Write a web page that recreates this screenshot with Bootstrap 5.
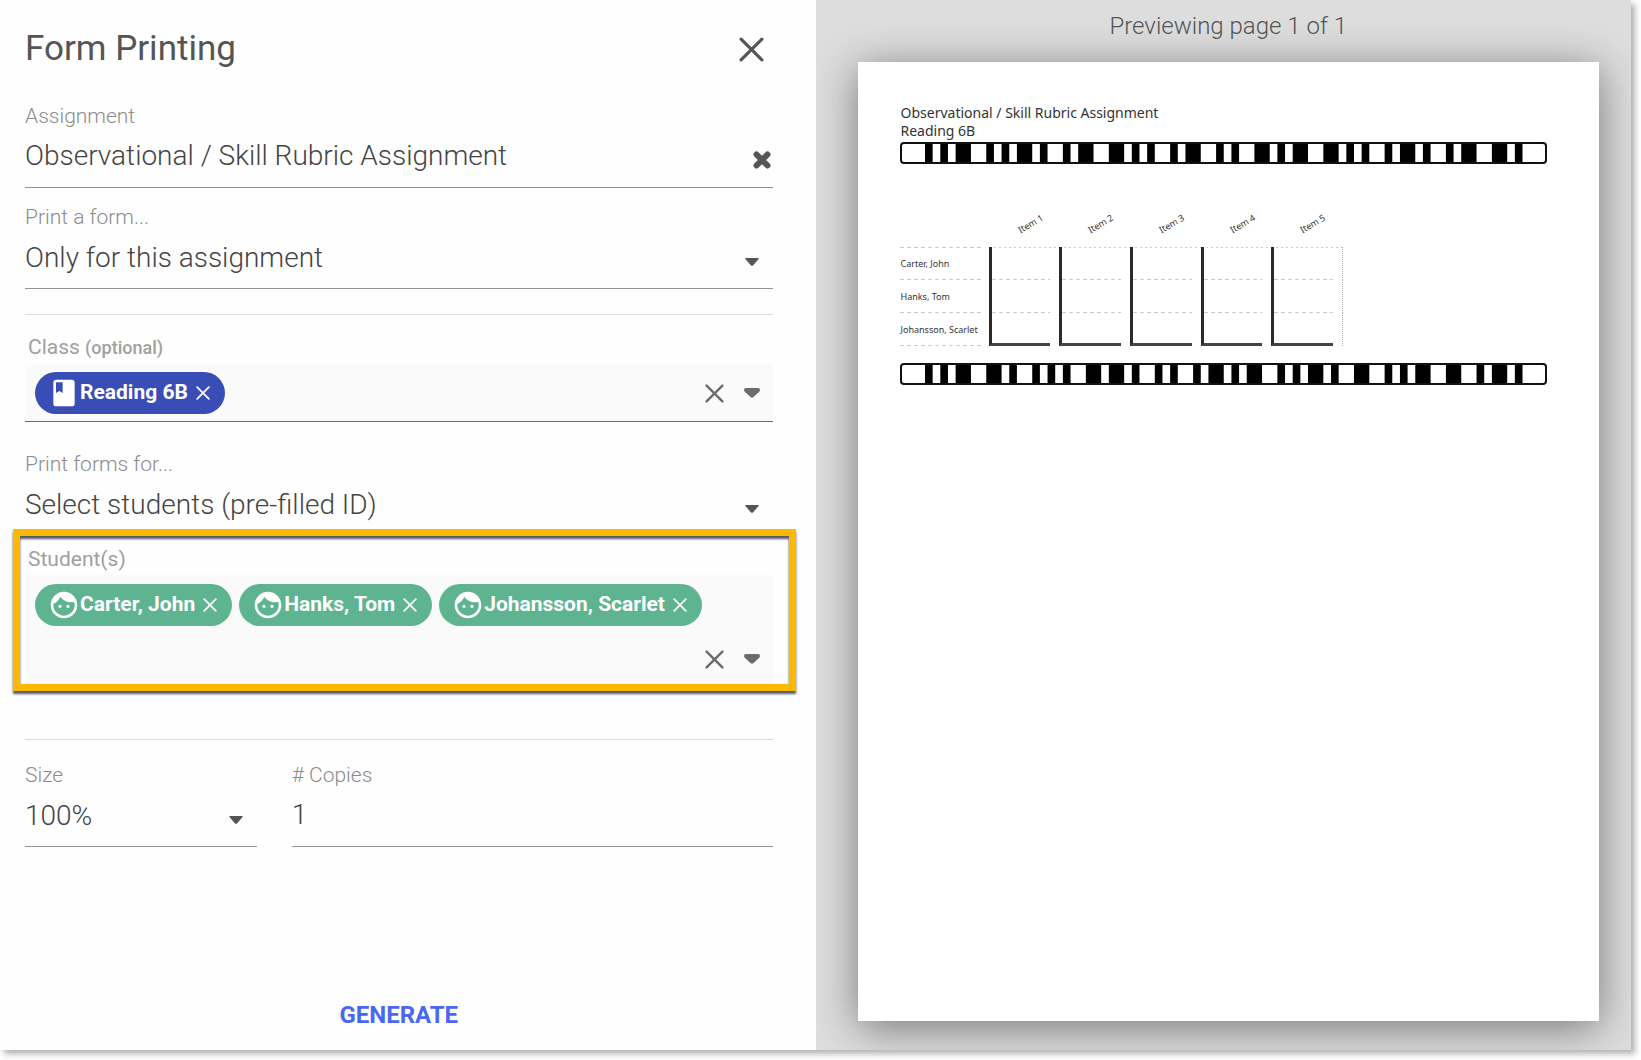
<!DOCTYPE html>
<html lang="en">
<head>
<meta charset="utf-8">
<meta name="viewport" content="width=device-width, initial-scale=1">
<title>Form Printing</title>
<link href="https://cdn.jsdelivr.net/npm/bootstrap@5.3.0/dist/css/bootstrap.min.css" rel="stylesheet">
<style>
  body { font-family: Roboto, "Liberation Sans", sans-serif; color: #555; background: #fff; padding: 0 10px 10px 0; }
  .print-dialog { box-shadow: 4px 4px 6px rgba(0,0,0,.3); }
  .form-side { background: #fefefe; padding: 25px 43px 16px 25px; }
  .dialog-title { font-size: 35px; line-height: 48px; font-weight: 400; }
  .icon-btn { border: 0; background: none; padding: 0; color: inherit; display: flex; }
  .title-close { margin-right: 9px; }
  .stroke-icon { fill: none; stroke: currentColor; stroke-linecap: round; }
  .first-field { margin-top: 31px; }
  .field-label { display: block; font-size: 21px; line-height: 24px; font-weight: 300; color: #8c8c8c; }
  .tag-label { font-weight: 400; color: #a0a0a0; padding-left: 3px; margin-bottom: 4px; }
  .tag-label span { font-size: 18px; font-weight: 500; }
  .field-value { display: block; width: 100%; height: 60px; border: 0; border-bottom: 1px solid #949494; border-radius: 0; background: none; padding: 0 40px 5px 0; font-size: 28px; font-weight: 300; color: #444; appearance: none; outline: 0; }
  select.field-value { padding-bottom: 1px; }
  .field-arrow { right: 14px; top: 53px; pointer-events: none; }
  .field-clear { right: 2px; top: 47px; }
  .field-gap { margin-top: 17px; }
  .rule { height: 1px; border: 0; background: #dcdcdc; opacity: 1; }
  .rule-upper { margin: 25px 0 0; }
  .rule-lower { margin: 54px 0 0; }
  .tag-box { background: #fafafa; padding: 8px 13px 7px 10px; gap: 7px; color: #6b6b6b; }
  .class-box { border-bottom: 1px solid #6b6b6b; }
  .student-box { padding-top: 9px; padding-bottom: 5px; }
  .tag { height: 42px; border-radius: 21px; padding: 0 15px 0 13px; font-size: 21px; font-weight: 700; color: #fff; }
  .tag .icon-btn { margin-left: 8px; }
  .tag-class { background: #394db7; }
  .tag-student { background: #5eb491; }
  .tag-tools { gap: 20px; height: 42px; }
  .tools-row { margin-top: 5px; }
  .target-field { margin-top: 30px; }
  .students { margin-top: 11px; }
  .highlight { top: -18px; left: -12px; right: -23px; bottom: -6px; border: 7px solid #fcb900; filter: drop-shadow(0 3px 1px rgba(40,45,65,.8)); pointer-events: none; }
  .size-field { flex: 0 0 31%; }
  .size-row { gap: 35px; margin-top: 23px; }
  .generate { border: 0; background: none; font-size: 24px; line-height: 36px; font-weight: 700; color: #4967f2; }
  .preview-side { background: #ddd; padding: 0 32px 29px 42px; overflow: hidden; }
  .preview-title { font-size: 24px; line-height: 52px; font-weight: 300; margin-bottom: 10px; }
  .paper { background: #fff; box-shadow: 0 7px 40px rgba(0,0,0,.46); padding: 42px 52px 42px 42px; font-family: "Noto Sans", "Open Sans", sans-serif; color: #333; }
  .paper-head { font-size: 14px; line-height: 18px; padding: 0 0 2px 1px; }
  .strip { display: block; width: 100%; height: 22px; border: 2px solid #111; border-radius: 4px; background: #fff; }
  .rubric { width: 443px; table-layout: fixed; border-collapse: collapse; margin-bottom: 17px; font-size: 9px; }
  .rubric th { font-weight: 400; padding: 0 0 0 1px; }
  .rubric thead th { height: 83px; text-align: center; vertical-align: bottom; }
  .name-col { width: 89px; }
  .item-name { display: inline-block; transform: rotate(-30deg); margin: 0 0 17px 12px; }
  .rubric tbody th { height: 33px; background: repeating-linear-gradient(90deg,#ccc 0 4px,transparent 4px 7px) left bottom / 81px 1px no-repeat; }
  .rubric tbody tr:first-child th { background: repeating-linear-gradient(90deg,#ccc 0 4px,transparent 4px 7px) left bottom / 81px 1px no-repeat, repeating-linear-gradient(90deg,#ccc 0 4px,transparent 4px 7px) left top / 81px 1px no-repeat; }
  .rubric td { padding: 0 9px 0 0; height: 33px; }
  .rubric tbody tr:first-child td { background: repeating-linear-gradient(90deg,#ccc 0 2px,transparent 2px 5px) left top / 100% 1px no-repeat; }
  .rubric td:last-child { border-right: 1px dotted #aaa; }
  .answer { height: 33px; border-left: 3px solid #2a2a2a; background: repeating-linear-gradient(90deg,#ccc 0 4px,transparent 4px 7px) left bottom / 100% 1px no-repeat; }
  .rubric tr:last-child .answer { border-bottom: 3px solid #444; background: none; }
</style>
</head>
<body class="d-flex min-vh-100">
<svg class="d-none" xmlns="http://www.w3.org/2000/svg">
  <symbol id="i-x" viewBox="0 0 24 24"><path d="M2 2 22 22M22 2 2 22"/></symbol>
  <symbol id="i-face" viewBox="0 0 24 24"><path d="M9 11.75a1.25 1.25 0 1 0 0 2.5 1.25 1.25 0 0 0 0-2.5zm6 0a1.25 1.25 0 1 0 0 2.5 1.25 1.25 0 0 0 0-2.5zM12 2C6.48 2 2 6.48 2 12s4.48 10 10 10 10-4.480 10-10S17.520 2 12 2zm0 18c-4.410 0-8-3.590-8-8 0-.29.02-.58.05-.86 2.360-1.050 4.230-2.980 5.210-5.370C11.070 8.330 14.050 10 17.420 10c.78 0 1.530-.09 2.250-.26.21.71.33 1.470.33 2.260 0 4.410-3.590 8-8 8z"/></symbol>
  <symbol id="i-book" viewBox="0 0 24 24"><path d="M18 2H6c-1.100 0-2 .9-2 2v16c0 1.100.9 2 2 2h12c1.100 0 2-.9 2-2V4c0-1.100-.9-2-2-2zM6 4h5v8l-2.500-1.500L6 12V4z"/></symbol>
  <symbol id="i-arrow" viewBox="0 0 14 8"><path d="M1 0h12q1 0 .6 1L8 7.400q-1 .9-2 0L.4 1Q0 0 1 0z"/></symbol>
  <symbol id="i-caret" viewBox="0 0 16 10"><path d="M2 0h12q2 0 2 2 0 1-1 2L9.500 9q-1.500 1.500-3 0L1 4Q0 3 0 2 0 0 2 0z"/></symbol>
</svg>
<main class="print-dialog d-flex flex-fill">
  <form class="form-side w-50 d-flex flex-column">
    <div class="d-flex justify-content-between align-items-center">
      <h1 class="dialog-title mb-0">Form Printing</h1>
      <button type="button" class="icon-btn title-close" aria-label="Close"><svg class="stroke-icon" width="25" height="25" stroke-width="3"><use href="#i-x"/></svg></button>
    </div>

    <div class="first-field position-relative">
      <label class="field-label" for="assignment">Assignment</label>
      <input class="field-value" id="assignment" type="text" value="Observational / Skill Rubric Assignment">
      <button type="button" class="icon-btn field-clear position-absolute" aria-label="Clear assignment"><svg class="stroke-icon" width="18" height="18" viewBox="0 0 18 18" stroke-width="6"><path d="M3.500 3.500l11 11m0-11l-11 11"/></svg></button>
    </div>

    <div class="position-relative field-gap">
      <label class="field-label" for="scope">Print a form...</label>
      <select class="field-value" id="scope"><option>Only for this assignment</option></select>
      <svg class="field-arrow position-absolute" width="14" height="8" fill="currentColor"><use href="#i-arrow"/></svg>
    </div>

    <hr class="rule rule-upper">

    <div class="mt-3 pt-1" role="group" aria-labelledby="class-label">
      <div class="field-label tag-label" id="class-label">Class <span>(optional)</span></div>
      <div class="tag-box class-box d-flex align-items-center">
        <span class="tag tag-class d-flex align-items-center">
          <svg width="32" height="32" fill="currentColor"><use href="#i-book"/></svg>Reading 6B
          <button type="button" class="icon-btn" aria-label="Remove Reading 6B"><svg class="stroke-icon" width="14" height="14" stroke-width="3"><use href="#i-x"/></svg></button>
        </span>
        <span class="tag-tools d-flex align-items-center ms-auto">
          <button type="button" class="icon-btn" aria-label="Clear class"><svg class="stroke-icon" width="19" height="19" stroke-width="3"><use href="#i-x"/></svg></button>
          <button type="button" class="icon-btn" aria-label="Open class list"><svg width="16" height="10" fill="currentColor"><use href="#i-caret"/></svg></button>
        </span>
      </div>
    </div>

    <div class="target-field position-relative">
      <label class="field-label" for="target">Print forms for...</label>
      <select class="field-value" id="target"><option>Select students (pre-filled ID)</option></select>
      <svg class="field-arrow position-absolute" width="14" height="8" fill="currentColor"><use href="#i-arrow"/></svg>
    </div>

    <div class="students position-relative" role="group" aria-labelledby="students-label">
      <div class="field-label tag-label" id="students-label">Student(s)</div>
      <div class="tag-box student-box d-flex flex-wrap">
        <span class="tag tag-student d-flex align-items-center">
          <svg width="32" height="32" fill="currentColor"><use href="#i-face"/></svg>Carter, John
          <button type="button" class="icon-btn" aria-label="Remove Carter, John"><svg class="stroke-icon" width="14" height="14" stroke-width="3"><use href="#i-x"/></svg></button>
        </span>
        <span class="tag tag-student d-flex align-items-center">
          <svg width="32" height="32" fill="currentColor"><use href="#i-face"/></svg>Hanks, Tom
          <button type="button" class="icon-btn" aria-label="Remove Hanks, Tom"><svg class="stroke-icon" width="14" height="14" stroke-width="3"><use href="#i-x"/></svg></button>
        </span>
        <span class="tag tag-student d-flex align-items-center">
          <svg width="32" height="32" fill="currentColor"><use href="#i-face"/></svg>Johansson, Scarlet
          <button type="button" class="icon-btn" aria-label="Remove Johansson, Scarlet"><svg class="stroke-icon" width="14" height="14" stroke-width="3"><use href="#i-x"/></svg></button>
        </span>
        <span class="tag-tools tools-row d-flex align-items-center justify-content-end w-100">
          <button type="button" class="icon-btn" aria-label="Clear students"><svg class="stroke-icon" width="19" height="19" stroke-width="3"><use href="#i-x"/></svg></button>
          <button type="button" class="icon-btn" aria-label="Open student list"><svg width="16" height="10" fill="currentColor"><use href="#i-caret"/></svg></button>
        </span>
      </div>
      <div class="highlight position-absolute"></div>
    </div>

    <hr class="rule rule-lower">

    <div class="size-row d-flex">
      <div class="size-field position-relative">
        <label class="field-label" for="size">Size</label>
        <select class="field-value" id="size"><option>100%</option></select>
        <svg class="field-arrow position-absolute" width="14" height="8" fill="currentColor"><use href="#i-arrow"/></svg>
      </div>
      <div class="flex-fill">
        <label class="field-label" for="copies"># Copies</label>
        <input class="field-value" id="copies" type="text" inputmode="numeric" value="1">
      </div>
    </div>

    <button type="submit" class="generate mt-auto align-self-center">GENERATE</button>
  </form>

  <section class="preview-side w-50 d-flex flex-column">
    <h2 class="preview-title text-center">Previewing page 1 of 1</h2>
    <article class="paper flex-fill">
      <div class="paper-head">Observational / Skill Rubric Assignment<br>Reading 6B</div>
      <svg class="strip" viewBox="0 0 84 18" preserveAspectRatio="none" stroke="#000" stroke-width="18" aria-hidden="true"><path d="M3 9h1m1 0h1m1 0h2m2 0h1m1 0h1m1 0h2m1 0h1m2 0h1m1 0h2m2 0h2m1 0h1m1 0h1m2 0h1m1 0h2m2 0h1m1 0h1m2 0h2m1 0h1m1 0h2m2 0h2m1 0h1m1 0h1m2 0h1m1 0h2m1 0h1m2 0h1m1 0h2m2 0h2m1 0h1"/></svg>
      <table class="rubric">
        <thead><tr><th class="name-col"></th>
          <th scope="col"><span class="item-name">Item 1</span></th><th scope="col"><span class="item-name">Item 2</span></th><th scope="col"><span class="item-name">Item 3</span></th><th scope="col"><span class="item-name">Item 4</span></th><th scope="col"><span class="item-name">Item 5</span></th></tr></thead>
        <tbody>
          <tr><th scope="row">Carter, John</th><td><div class="answer"></div></td><td><div class="answer"></div></td><td><div class="answer"></div></td><td><div class="answer"></div></td><td><div class="answer"></div></td></tr>
          <tr><th scope="row">Hanks, Tom</th><td><div class="answer"></div></td><td><div class="answer"></div></td><td><div class="answer"></div></td><td><div class="answer"></div></td><td><div class="answer"></div></td></tr>
          <tr><th scope="row">Johansson, Scarlet</th><td><div class="answer"></div></td><td><div class="answer"></div></td><td><div class="answer"></div></td><td><div class="answer"></div></td><td><div class="answer"></div></td></tr>
        </tbody>
      </table>
      <svg class="strip" viewBox="0 0 84 18" preserveAspectRatio="none" stroke="#000" stroke-width="18" aria-hidden="true"><path d="M3 9h1m1 0h1m1 0h2m2 0h2m1 0h1m2 0h1m1 0h1m1 0h1m2 0h2m1 0h2m1 0h1m2 0h1m1 0h1m2 0h1m1 0h2m1 0h1m1 0h2m2 0h1m1 0h1m1 0h2m1 0h1m2 0h2m2 0h1m1 0h1m1 0h2m2 0h2m2 0h1m1 0h2m1 0h1"/></svg>
    </article>
  </section>
</main>
<script src="https://cdn.jsdelivr.net/npm/bootstrap@5.3.0/dist/js/bootstrap.bundle.min.js"></script>
</body>
</html>
